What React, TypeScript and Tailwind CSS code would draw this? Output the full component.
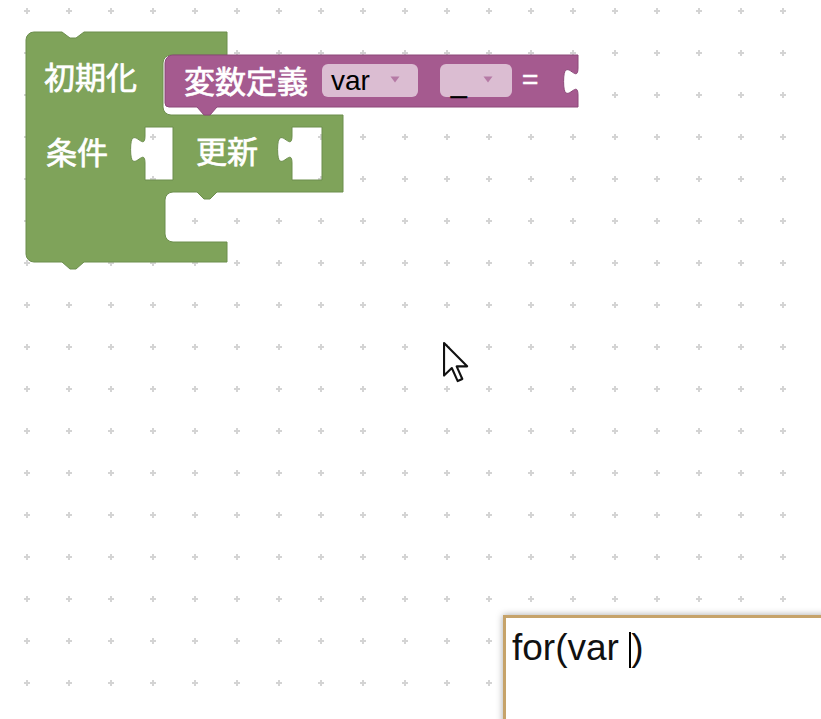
import React from 'react';

// jigsaw tab used by value inputs (scaled blockly puzzle tab)
const tabDown = 'c 0,18 -14.4,-14.4 -14.4,13.5 s 14.4,-4.5 14.4,13.5';
const tabUp = 'c 0,-18 -14.4,14.4 -14.4,-13.5 s 14.4,4.5 14.4,-13.5';

const greenPath = [
    'M 26,40 A 8,8 0 0 1 34,32 H 62 l 8,6 h 6 l 8,-6 H 227 V 55',
    'H 171 A 8,8 0 0 0 163,63 V 107 A 8,8 0 0 0 171,115 H 343 V 192',
    'H 217 l -7,7 h -6 l -7,-7 H 173 A 8,8 0 0 0 165,200 V 234 A 8,8 0 0 0 173,242',
    'H 227 V 262 H 84 l -8,7 h -6 l -8,-7 H 34 A 8,8 0 0 1 26,254 Z',
    `M 145,127 H 173 V 180 H 145 V 163 ${tabUp} V 127 Z`,
    `M 292,127 H 322 V 180 H 292 V 163 ${tabUp} V 127 Z`,
].join(' ');

const purplePath = `M 165,63 A 8,8 0 0 1 173,55 H 578 V 68 ${tabDown} V 107 H 217 l -7,8 h -6 l -7,-8 H 169 A 4,4 0 0 1 165,103 Z`;

const cjk = '"Noto Sans CJK JP", "Noto Sans", sans-serif';
const latin = '"Liberation Sans", Arial, sans-serif';

function Label({ x, y, children }: { x: number; y: number; children: React.ReactNode }) {
    return (
        <text x={x} y={y} fill="#fff" stroke="#fff" strokeWidth="0.7" fontSize="31" fontFamily={cjk}>
            {children}
        </text>
    );
}

function Workspace() {
    return (
        <svg className="absolute inset-0" width="821" height="719" viewBox="0 0 821 719">
            <defs>
                <pattern id="grid" patternUnits="userSpaceOnUse" x="6" y="-10" width="42" height="42">
                    <rect x="18" y="20" width="6" height="2" fill="#d4d4d4" />
                    <rect x="20" y="18" width="2" height="6" fill="#d4d4d4" />
                </pattern>
            </defs>
            <rect width="821" height="719" fill="url(#grid)" />

            {/* for block */}
            <path d={greenPath} fill="#7fa35a" fillRule="evenodd" stroke="#6c8e4d" strokeWidth="1" />
            <Label x={44} y={89}>初期化</Label>
            <Label x={46} y={164}>条件</Label>
            <Label x={196} y={163}>更新</Label>

            {/* variable definition block */}
            <path d={purplePath} fill="#a55a8f" stroke="#8c4979" strokeWidth="1" />
            <Label x={184} y={93}>変数定義</Label>

            <rect x="322" y="64" width="96" height="33" rx="6" fill="#dbbdd2" />
            <text x="331" y="90" fill="#000" fontSize="28" fontFamily={latin}>var</text>
            <path d="M 390.5,76.5 h 9 l -4.5,6 Z" fill="#b57aa5" />

            <rect x="440" y="64" width="72" height="33" rx="6" fill="#dbbdd2" />
            <text x="451" y="92" fill="#000" stroke="#000" strokeWidth="0.6" fontSize="28" fontFamily={latin}>_</text>
            <path d="M 483.5,76.5 h 9 l -4.5,6 Z" fill="#b57aa5" />

            <text x="522" y="89" fill="#fff" stroke="#fff" strokeWidth="0.6" fontSize="28" fontFamily={latin}>=</text>

            {/* mouse pointer */}
            <g transform="translate(443,342) scale(2.1)">
                <path
                    d="M 0.5,0.5 V 16 L 4.2,12.4 L 7,18.6 L 9.2,17.6 L 6.5,11.6 H 11.5 Z"
                    fill="#fff"
                    stroke="#111"
                    strokeWidth="1"
                    strokeLinejoin="round"
                />
            </g>
        </svg>
    );
}

export default function App() {
    return (
        <div className="relative w-[821px] h-[719px] overflow-hidden bg-white">
            <Workspace />

            {/* code preview box */}
            <div className="absolute left-[503px] top-[615px] w-[340px] h-[130px] bg-white border-[3px] border-[#c6a36a] shadow-[0_0_7px_rgba(0,0,0,0.35)]">
                <div
                    className="pl-[6px] pt-[2px] text-[37px] leading-normal text-[#111] flex items-center"
                    style={{ fontFamily: latin }}
                >
                    <span className="whitespace-pre">for(var </span>
                    <span className="inline-block w-[2px] h-[36px] bg-black mt-[4px]" />
                    <span>)</span>
                </div>
            </div>
        </div>
    );
}
